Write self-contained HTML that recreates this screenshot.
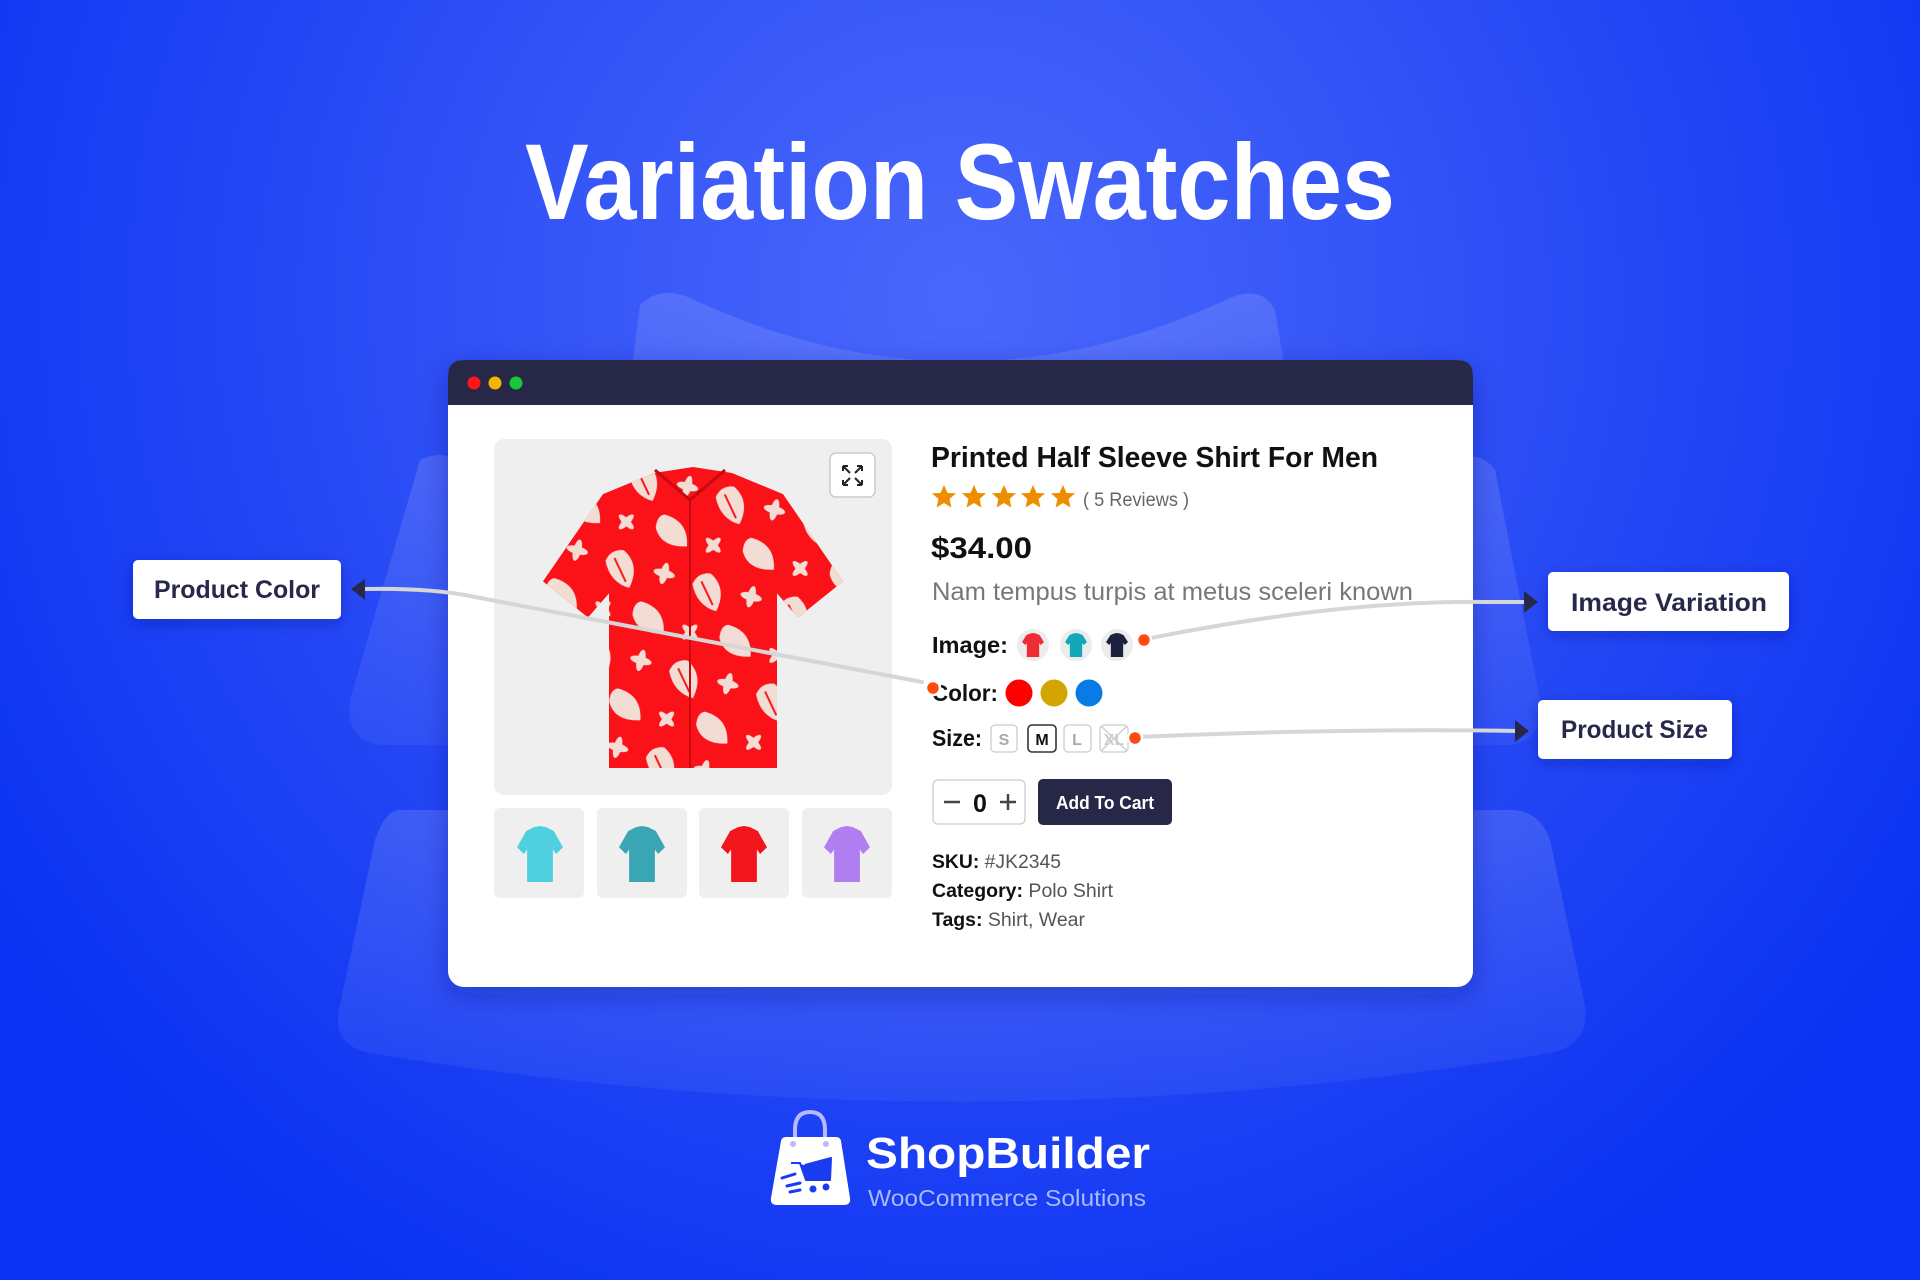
<!DOCTYPE html>
<html><head><meta charset="utf-8"><style>
html,body{margin:0;padding:0;width:1920px;height:1280px;overflow:hidden;}
svg{display:block;font-family:"Liberation Sans",sans-serif;}
</style></head><body>
<svg width="1920" height="1280" viewBox="0 0 1920 1280" xmlns="http://www.w3.org/2000/svg">
<defs>
<radialGradient id="bg" cx="960" cy="300" r="1150" gradientUnits="userSpaceOnUse">
<stop offset="0" stop-color="#4a68fb"/>
<stop offset="0.45" stop-color="#2f50f6"/>
<stop offset="1" stop-color="#0a32f2"/>
</radialGradient>
<linearGradient id="tp" x1="0" y1="0" x2="0" y2="1">
<stop offset="0" stop-color="#ffffff" stop-opacity="0.13"/>
<stop offset="1" stop-color="#ffffff" stop-opacity="0.05"/>
</linearGradient>
<filter id="sh" x="-20%" y="-20%" width="140%" height="140%"><feDropShadow dx="0" dy="8" stdDeviation="14" flood-color="#0a1580" flood-opacity="0.35"/></filter>
<filter id="sh2" x="-20%" y="-30%" width="140%" height="160%"><feDropShadow dx="0" dy="4" stdDeviation="7" flood-color="#0a1580" flood-opacity="0.35"/></filter>
<pattern id="fl" width="90" height="90" patternUnits="userSpaceOnUse" patternTransform="rotate(15)">
<g fill="#f3dcd4">
<path d="M25 10 Q45 20 40 45 Q20 45 10 25 Q12 12 25 10 Z"/>
<path d="M18 20 L35 40" stroke="#fa1218" stroke-width="2"/>
<ellipse cx="70" cy="22" rx="4" ry="11"/><ellipse cx="70" cy="22" rx="11" ry="4"/>
<path d="M55 55 Q80 55 85 80 Q60 88 50 70 Q48 58 55 55 Z"/>
<ellipse cx="20" cy="72" rx="3.5" ry="10" transform="rotate(30 20 72)"/><ellipse cx="20" cy="72" rx="10" ry="3.5" transform="rotate(30 20 72)"/>
</g>
</pattern>
<path id="shirt" d="M37 2 L50 0 L63 2 L80 9 L100 38 L85 50 L78 42 L78 100 L22 100 L22 42 L15 50 L0 38 L20 9 Z"/>
<path id="star" d="M0 -12 L3.5 -4 L12 -3.7 L5.6 2 L7.4 10.5 L0 6 L-7.4 10.5 L-5.6 2 L-12 -3.7 L-3.5 -4 Z"/>
</defs>
<rect width="1920" height="1280" fill="url(#bg)"/>
<path d="M640 305 Q660 285 690 298 Q960 425 1230 298 Q1262 285 1275 310 L1300 460 L620 460 Z" fill="url(#tp)"/>
<path d="M420 460 Q440 450 460 460 L1460 460 Q1480 450 1495 470 L1540 700 Q1545 740 1510 745 L380 745 Q345 740 350 700 Z" fill="url(#tp)"/>
<path d="M400 810 L1510 810 Q1540 810 1550 840 L1585 1005 Q1590 1045 1550 1053 Q960 1150 370 1053 Q330 1045 340 1005 L375 840 Q385 810 400 810 Z" fill="url(#tp)"/>
<text x="960" y="219" text-anchor="middle" font-size="108" font-weight="bold" fill="#fff" textLength="870" lengthAdjust="spacingAndGlyphs">Variation Swatches</text>
<g filter="url(#sh)">
<rect x="448" y="360" width="1025" height="627" rx="16" fill="#fff"/>
</g>
<path d="M464 360 L1457 360 Q1473 360 1473 376 L1473 405 L448 405 L448 376 Q448 360 464 360 Z" fill="#272848"/>
<circle cx="474" cy="383" r="6.5" fill="#ff1515"/>
<circle cx="495" cy="383" r="6.5" fill="#f4b400"/>
<circle cx="516" cy="383" r="6.5" fill="#17c93a"/>
<rect x="494" y="439" width="398" height="356" rx="10" fill="#efefef"/>
<use href="#shirt" transform="translate(543 467) scale(3 3.01)" fill="#fa1218"/>
<clipPath id="cp"><use href="#shirt" transform="translate(543 467) scale(3 3.01)"/></clipPath>
<rect x="540" y="465" width="310" height="310" fill="url(#fl)" clip-path="url(#cp)"/>
<path d="M655 470 L690 500 L725 470" fill="none" stroke="#c80a10" stroke-width="3"/>
<line x1="690" y1="500" x2="690" y2="768" stroke="#c80a10" stroke-width="2"/>
<rect x="830" y="453" width="45" height="44" rx="6" fill="#fff" stroke="#ccc" stroke-width="1.5"/>
<g stroke="#222" stroke-width="2" fill="none">
<path d="M843 466 l7 7 M843 466 h5 M843 466 v5"/>
<path d="M862 466 l-7 7 M862 466 h-5 M862 466 v5"/>
<path d="M843 485 l7 -7 M843 485 h5 M843 485 v-5"/>
<path d="M862 485 l-7 -7 M862 485 h-5 M862 485 v-5"/>
</g>
<rect x="494" y="808" width="90" height="90" rx="6" fill="#efefef"/>
<rect x="597" y="808" width="90" height="90" rx="6" fill="#efefef"/>
<rect x="699" y="808" width="90" height="90" rx="6" fill="#efefef"/>
<rect x="802" y="808" width="90" height="90" rx="6" fill="#efefef"/>
<use href="#shirt" transform="translate(517 826) scale(0.46 0.56)" fill="#4fd0e0"/>
<use href="#shirt" transform="translate(619 826) scale(0.46 0.56)" fill="#3aa6b3"/>
<use href="#shirt" transform="translate(721 826) scale(0.46 0.56)" fill="#f2151b"/>
<use href="#shirt" transform="translate(824 826) scale(0.46 0.56)" fill="#b07ef0"/>
<text x="931" y="467" font-size="29" font-weight="bold" fill="#111" textLength="447" lengthAdjust="spacingAndGlyphs">Printed Half Sleeve Shirt For Men</text>
<g fill="#f08c00">
<use href="#star" x="944" y="497"/><use href="#star" x="974" y="497"/><use href="#star" x="1004" y="497"/><use href="#star" x="1033" y="497"/><use href="#star" x="1063" y="497"/>
</g>
<text x="1083" y="506" font-size="19" fill="#666" textLength="106" lengthAdjust="spacingAndGlyphs">( 5 Reviews )</text>
<text x="931" y="558" font-size="30" font-weight="bold" fill="#111" textLength="101" lengthAdjust="spacingAndGlyphs">$34.00</text>
<text x="932" y="600" font-size="25" fill="#777" textLength="481" lengthAdjust="spacingAndGlyphs">Nam tempus turpis at metus sceleri known</text>
<text x="932" y="653" font-size="23" font-weight="bold" fill="#111" textLength="76" lengthAdjust="spacingAndGlyphs">Image:</text>
<circle cx="1033" cy="645" r="16" fill="#ececec"/><use href="#shirt" transform="translate(1022 633) scale(0.22 0.24)" fill="#ef2b35"/>
<circle cx="1076" cy="645" r="16" fill="#ececec"/><use href="#shirt" transform="translate(1065 633) scale(0.22 0.24)" fill="#12a8b8"/>
<circle cx="1117" cy="645" r="16" fill="#ececec"/><use href="#shirt" transform="translate(1106 633) scale(0.22 0.24)" fill="#1d2040"/>
<text x="932" y="701" font-size="23" font-weight="bold" fill="#111" textLength="66" lengthAdjust="spacingAndGlyphs">Color:</text>
<circle cx="1019" cy="693" r="13.5" fill="#ff0000"/>
<circle cx="1054" cy="693" r="13.5" fill="#d2a500"/>
<circle cx="1089" cy="693" r="13.5" fill="#0a7be6"/>
<text x="932" y="746" font-size="23" font-weight="bold" fill="#111" textLength="50" lengthAdjust="spacingAndGlyphs">Size:</text>
<g font-size="16" font-weight="bold" text-anchor="middle">
<rect x="991" y="725" width="26" height="27" rx="4" fill="#fff" stroke="#ccc" stroke-width="1.3"/><text x="1004" y="745" fill="#aaa">S</text>
<rect x="1028" y="725" width="28" height="27" rx="4" fill="#fff" stroke="#333" stroke-width="1.6"/><text x="1042" y="745" fill="#111">M</text>
<rect x="1064" y="725" width="27" height="27" rx="4" fill="#fff" stroke="#ccc" stroke-width="1.3"/><text x="1077" y="745" fill="#aaa">L</text>
<rect x="1100" y="725" width="28" height="27" rx="4" fill="#fff" stroke="#ccc" stroke-width="1.3"/><text x="1114" y="745" fill="#ccc">XL</text>
<path d="M1101 726 L1127 751 M1127 726 L1101 751" stroke="#ccc" stroke-width="1.3"/>
</g>
<rect x="933" y="780" width="92" height="44" rx="5" fill="#fff" stroke="#ccc" stroke-width="1.3"/>
<path d="M944 802 h16 M1000 802 h16 M1008 794 v16" stroke="#444" stroke-width="2.5"/>
<text x="980" y="812" font-size="25" font-weight="bold" fill="#111" text-anchor="middle">0</text>
<rect x="1038" y="779" width="134" height="46" rx="5" fill="#272848"/>
<text x="1105" y="809" font-size="18" font-weight="bold" fill="#fff" text-anchor="middle" textLength="98" lengthAdjust="spacingAndGlyphs">Add To Cart</text>
<g font-size="19">
<text x="932" y="868" fill="#111" textLength="129" lengthAdjust="spacingAndGlyphs"><tspan font-weight="bold">SKU:</tspan> <tspan fill="#555">#JK2345</tspan></text>
<text x="932" y="897" fill="#111" textLength="181" lengthAdjust="spacingAndGlyphs"><tspan font-weight="bold">Category:</tspan> <tspan fill="#555">Polo Shirt</tspan></text>
<text x="932" y="926" fill="#111" textLength="153" lengthAdjust="spacingAndGlyphs"><tspan font-weight="bold">Tags:</tspan> <tspan fill="#555">Shirt, Wear</tspan></text>
</g>
<g fill="none" stroke="#d6d6d6" stroke-width="4" stroke-linecap="round">
<path d="M366 589 Q430 588 470 596 L922 682"/>
<path d="M1146 639 Q1340 600 1488 602 L1528 602"/>
<path d="M1137 737 Q1350 728 1518 731"/>
</g>
<path d="M351 589 L365 579 L365 600 Z" fill="#272848"/>
<path d="M1538 602 L1524 591 L1524 613 Z" fill="#272848"/>
<path d="M1529 731 L1515 720 L1515 742 Z" fill="#272848"/>
<g fill="#ff4a10" stroke="#fff" stroke-width="2.5">
<circle cx="933" cy="688" r="7"/>
<circle cx="1144" cy="640" r="7"/>
<circle cx="1135" cy="738" r="7"/>
</g>
<g filter="url(#sh2)">
<rect x="133" y="560" width="208" height="59" rx="5" fill="#fff"/>
<rect x="1548" y="572" width="241" height="59" rx="5" fill="#fff"/>
<rect x="1538" y="700" width="194" height="59" rx="5" fill="#fff"/>
</g>
<g font-size="25" font-weight="bold" fill="#27284a">
<text x="154" y="598" textLength="166" lengthAdjust="spacingAndGlyphs">Product Color</text>
<text x="1571" y="611" textLength="196" lengthAdjust="spacingAndGlyphs">Image Variation</text>
<text x="1561" y="738" textLength="147" lengthAdjust="spacingAndGlyphs">Product Size</text>
</g>
<path d="M795 1146 L795 1130 Q795 1112 810 1112 Q825 1112 825 1130 L825 1146" fill="none" stroke="#b9b9ff" stroke-width="4"/>
<path d="M786 1137 L836 1137 Q840 1137 841 1141 L850 1198 Q851 1205 844 1205 L777 1205 Q770 1205 771 1198 L781 1141 Q782 1137 786 1137 Z" fill="#fff"/>
<circle cx="793" cy="1144" r="3" fill="#b9b9ff"/><circle cx="826" cy="1144" r="3" fill="#b9b9ff"/>
<path d="M791 1163 L800 1163 L806 1180 L830 1180 L831 1158 L805 1165" fill="#1a3cf0" stroke="#1a3cf0" stroke-width="2" stroke-linejoin="round"/>
<path d="M782 1178 L795 1174 M787 1186 L800 1183 M790 1192 L800 1190" stroke="#1a3cf0" stroke-width="3" stroke-linecap="round"/>
<circle cx="813" cy="1189" r="3.5" fill="#1a3cf0"/><circle cx="826" cy="1187" r="3.5" fill="#1a3cf0"/>
<text x="866" y="1168" font-size="44" font-weight="bold" fill="#fff" textLength="284" lengthAdjust="spacingAndGlyphs">ShopBuilder</text>
<text x="868" y="1206" font-size="23" fill="#a9b9ff" textLength="278" lengthAdjust="spacingAndGlyphs">WooCommerce Solutions</text>
</svg>
</body></html>
